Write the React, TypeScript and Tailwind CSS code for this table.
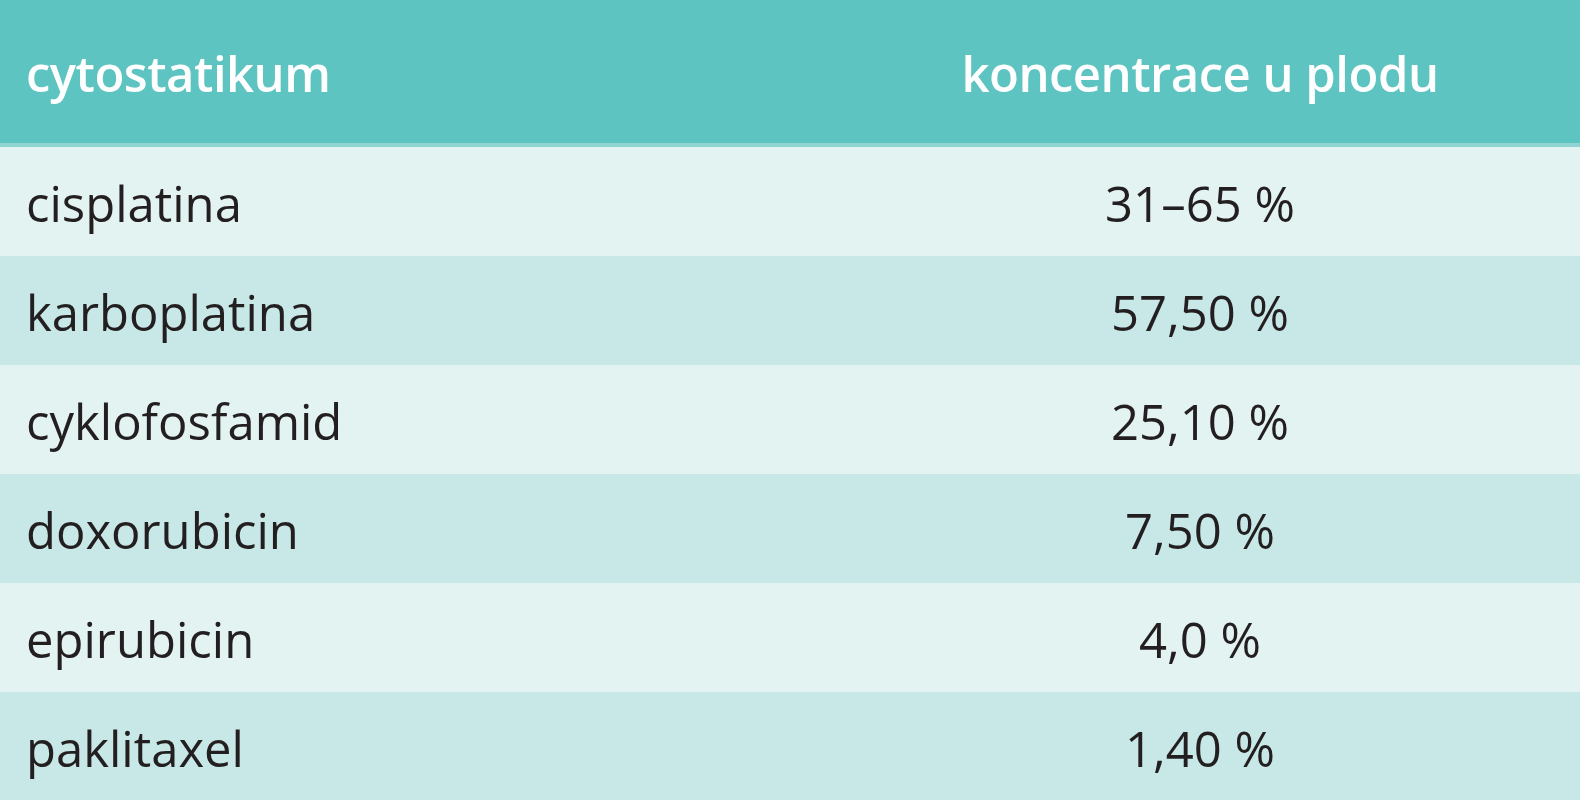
const rows = [
  { name: "cisplatina", value: "31–65 %" },
  { name: "karboplatina", value: "57,50 %" },
  { name: "cyklofosfamid", value: "25,10 %" },
  { name: "doxorubicin", value: "7,50 %" },
  { name: "epirubicin", value: "4,0 %" },
  { name: "paklitaxel", value: "1,40 %" },
];

export default function App() {
  return (
    <div className="h-[800px] w-[1580px] overflow-hidden bg-[#c8e8e7] font-['Open_Sans',sans-serif] text-[49px] leading-none text-[#231f20]">
      <div className="grid h-[143px] grid-cols-[820px_1fr] items-center bg-[#5dc4c1] font-semibold text-white">
        <div className="pl-[26px] pt-[4px] tracking-[-0.5px]">cytostatikum</div>
        <div className="pt-[4px] text-center tracking-[-0.5px]">koncentrace u plodu</div>
      </div>
      <div className="h-[4px] bg-[#8fd4d1]" />
      {rows.map((r, i) => (
        <div
          key={r.name}
          className={`grid h-[109px] grid-cols-[820px_1fr] items-center pt-[3px] ${
            i % 2 === 0 ? "bg-[#e3f3f2]" : "bg-[#c8e8e7]"
          }`}
        >
          <div className="pl-[26px]">{r.name}</div>
          <div className="text-center">{r.value}</div>
        </div>
      ))}
    </div>
  );
}
